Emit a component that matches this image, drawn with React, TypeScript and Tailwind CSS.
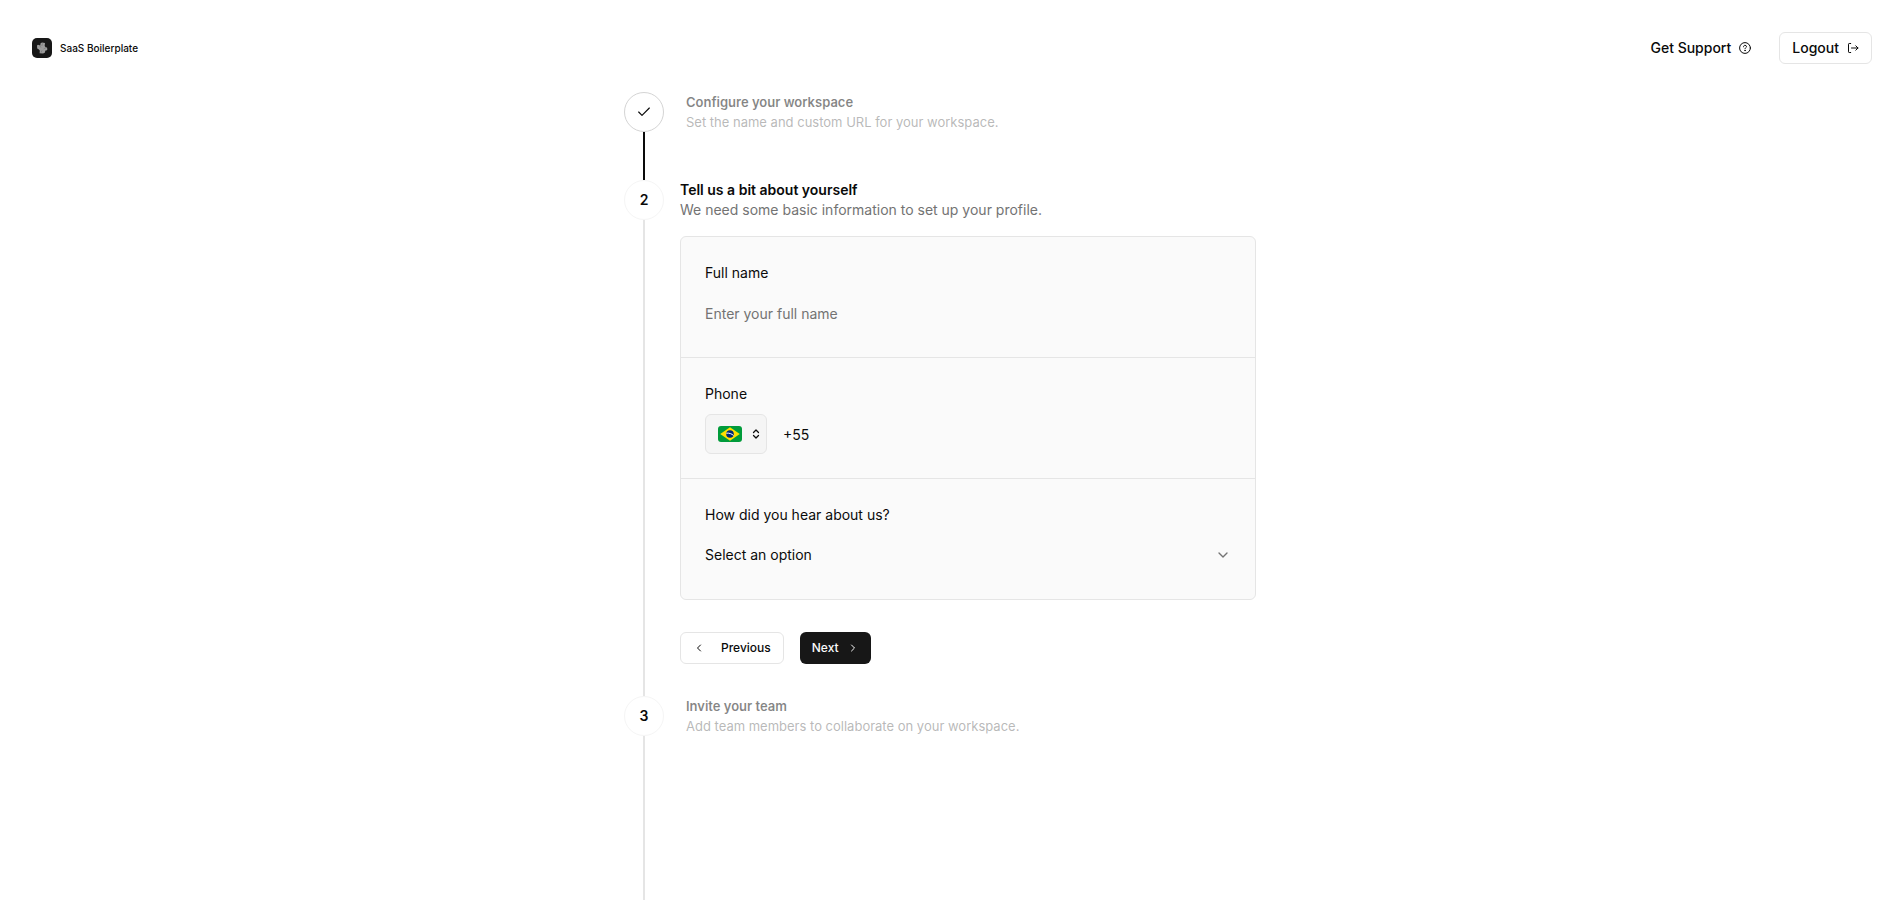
import type { ReactNode } from "react";
import { useState } from "react";
import {
  Check,
  ChevronDown,
  ChevronLeft,
  ChevronRight,
  ChevronsUpDown,
} from "lucide-react";

const sources = ["Google", "Social media", "A friend", "Other"];

function Logo() {
  return (
    <a href="#" className="flex items-center gap-2">
      <svg viewBox="0 0 20 20" className="size-5" aria-hidden="true">
        <rect width="20" height="20" rx="5" fill="#171717" />
        <path
          d="M8.6 5.2 10 4.6 13 5 12.7 8 13.6 9.2 15 9.4 15.4 11.4 14.4 12.6 13.4 12.4 12.8 14.8 11 15.4 7.6 15.2 7.8 12.4 6.6 11.2 5.2 10.6 5 7.6 6 6.8 8.2 7.6Z"
          fill="#9b9b9b"
        />
        <path d="M7.6 7.4 9 9.6M10.6 5.4 9.8 8M14 9.6 11.6 11M9 14.6 10 12.4" stroke="#777777" strokeWidth="0.7" />
      </svg>
      <span className="text-[10px] leading-4 font-medium">SaaS Boilerplate</span>
    </a>
  );
}

function HelpIcon() {
  return (
    <svg viewBox="0 0 12 12" className="size-3" fill="none" stroke="currentColor" strokeLinecap="round" aria-hidden="true">
      <circle cx="6" cy="6" r="5.4" />
      <path d="M4.5 4.8c0-.9.7-1.5 1.5-1.5s1.5.5 1.5 1.3C7.5 5.600 6 5.700 6 6.800" />
      <circle cx="6" cy="8.600" r="0.250" fill="currentColor" />
    </svg>
  );
}

function ExitIcon() {
  return (
    <svg viewBox="0 0 12 12" className="size-3" fill="none" stroke="currentColor" strokeLinecap="round" strokeLinejoin="round" aria-hidden="true">
      <path d="M3.700 1.500H2.200a.7.7 0 0 0-.7.7v7.600a.7.7 0 0 0 .7.7h1.500" />
      <path d="M4.500 6h6.500M8.800 3.800 11 6 8.800 8.200" />
    </svg>
  );
}

function BrazilFlag() {
  return (
    <svg viewBox="0 0 24 16" className="h-4 w-6 rounded-[3px]" aria-hidden="true">
      <rect width="24" height="16" fill="#009b3a" />
      <path d="M12 1.2 21.8 8 12 14.8 2.200 8Z" fill="#fedf00" />
      <circle cx="12" cy="8" r="3.8" fill="#002776" />
      <path d="M8.3 7.200c2.700-.4 5.600.6 7.200 2.300" stroke="#ffffff" fill="none" />
    </svg>
  );
}

type StepProps = {
  marker: ReactNode;
  title: string;
  description: string;
  state: "done" | "active" | "next";
  children?: ReactNode;
};

const circleStyles = {
  done: "border-neutral-300",
  active: "border-neutral-100",
  next: "border-neutral-100",
};

function Step({ marker, title, description, state, children }: StepProps) {
  const active = state === "active";
  return (
    <li className={`flex gap-4 ${state === "next" ? "flex-1" : ""}`}>
      <div className="flex flex-col items-center">
        <span
          className={`flex size-10 shrink-0 items-center justify-center rounded-full border text-sm font-semibold ${circleStyles[state]}`}
        >
          {marker}
        </span>
        <span
          className={`w-0.5 flex-1 ${state === "done" ? "bg-neutral-950" : "bg-neutral-200"}`}
        />
      </div>
      <div className={`max-w-xl min-w-0 flex-1 ${state === "done" ? "pb-12" : "pb-8"} ${active ? "" : "pl-1.5"}`}>
        <h2
          className={
            active
              ? "text-sm leading-5 font-semibold"
              : "text-[13px] leading-5 font-semibold text-neutral-950/50"
          }
        >
          {title}
        </h2>
        <p
          className={
            active
              ? "text-sm leading-5 text-neutral-500"
              : "text-[13px] leading-5 text-neutral-500/50"
          }
        >
          {description}
        </p>
        {children}
      </div>
    </li>
  );
}

function ProfileForm() {
  const [name, setName] = useState("");
  const [phone, setPhone] = useState("+55");

  return (
    <form className="mt-4" onSubmit={(event) => event.preventDefault()}>
      <div className="divide-y divide-neutral-200 rounded-md border border-neutral-200 bg-neutral-50 text-sm">
        <div className="flex flex-col gap-2 p-6">
          <label htmlFor="name" className="leading-6">
            Full name
          </label>
          <input
            id="name"
            value={name}
            onChange={(event) => setName(event.target.value)}
            placeholder="Enter your full name"
            className="h-10 w-full bg-transparent outline-none placeholder:text-neutral-500"
          />
        </div>
        <div className="flex flex-col gap-2 p-6">
          <label htmlFor="phone" className="leading-6">
            Phone
          </label>
          <div className="flex gap-4">
            <button
              type="button"
              aria-label="Country"
              className="flex h-10 items-center gap-2 rounded-md border border-neutral-200 bg-neutral-100 pr-1 pl-3"
            >
              <BrazilFlag />
              <ChevronsUpDown className="size-3" strokeWidth={2.5} />
            </button>
            <input
              id="phone"
              type="tel"
              value={phone}
              onChange={(event) => setPhone(event.target.value)}
              className="h-10 min-w-0 flex-1 bg-transparent outline-none"
            />
          </div>
        </div>
        <div className="flex flex-col gap-2 p-6">
          <label htmlFor="source" className="leading-6">
            How did you hear about us?
          </label>
          <div className="grid items-center">
            <select
              id="source"
              defaultValue=""
              className="col-start-1 row-start-1 h-10 w-full appearance-none bg-transparent outline-none"
            >
              <option value="">Select an option</option>
              {sources.map((source) => (
                <option key={source}>{source}</option>
              ))}
            </select>
            <ChevronDown className="pointer-events-none col-start-1 row-start-1 size-4 justify-self-end text-neutral-500" />
          </div>
        </div>
      </div>
      <div className="mt-8 flex gap-4 text-xs font-medium">
        <button
          type="button"
          className="flex h-8 items-center gap-4 rounded-md border border-neutral-200 px-3"
        >
          <ChevronLeft className="size-3" />
          Previous
        </button>
        <button
          type="submit"
          className="flex h-8 items-center gap-2 rounded-md bg-neutral-900 px-3 text-neutral-50"
        >
          Next
          <ChevronRight className="size-3" />
        </button>
      </div>
    </form>
  );
}

export default function App() {
  return (
    <div className="flex min-h-screen flex-col bg-white font-['Inter',sans-serif] text-neutral-950">
      <header className="flex items-center justify-between px-8 pt-8 pb-7">
        <Logo />
        <div className="flex items-center gap-4 text-sm font-medium">
          <a href="#" className="flex h-8 items-center gap-2 px-3">
            Get Support
            <HelpIcon />
          </a>
          <button
            type="button"
            className="flex h-8 items-center gap-2 rounded-md border border-neutral-200 px-3"
          >
            Logout
            <ExitIcon />
          </button>
        </div>
      </header>
      <main className="mx-auto flex w-full max-w-[656px] flex-1 flex-col">
        <ol className="flex flex-1 flex-col">
          <Step
            state="done"
            marker={<Check className="size-4" strokeWidth={1.75} />}
            title="Configure your workspace"
            description="Set the name and custom URL for your workspace."
          />
          <Step
            state="active"
            marker="2"
            title="Tell us a bit about yourself"
            description="We need some basic information to set up your profile."
          >
            <ProfileForm />
          </Step>
          <Step
            state="next"
            marker="3"
            title="Invite your team"
            description="Add team members to collaborate on your workspace."
          />
        </ol>
      </main>
    </div>
  );
}
